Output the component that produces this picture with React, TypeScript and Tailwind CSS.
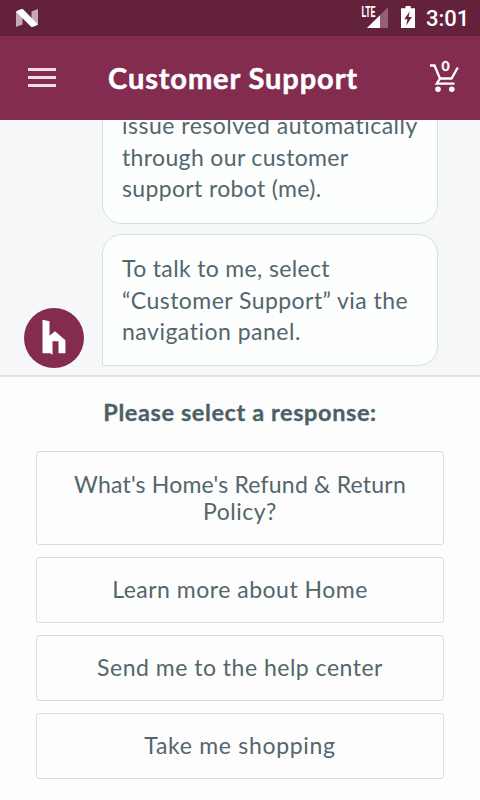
import type { ReactNode } from "react";

function StatusBar() {
  return (
    <div className="flex h-9 shrink-0 items-start justify-between bg-[#64213c]">
      <svg className="h-9 w-12" viewBox="0 0 48 36">
        <path d="M16 11.5 22.5 9V24.5L16 27ZM31.5 11.5 38 9V24.5L31.5 27Z" fill="#c8a9b7" />
        <path d="M16 11.8 Q19 9 22.8 9 L38 24.6 Q35 27 31.3 27Z" fill="#fff" />
      </svg>
      <div className="flex">
        <svg className="h-9 w-[66px]" viewBox="356 0 66 36">
          <text x="361.5" y="17" fontFamily="Roboto, sans-serif" fontWeight="700" fontSize="14" textLength="14" lengthAdjust="spacingAndGlyphs" fill="#fff">LTE</text>
          <path d="M388 7V28H367L378 17V19H376.5Z" fill="#946078" />
          <path d="M367 28 380 15.2V28Z" fill="#fff" />
          <path d="M405.5 6H410.7V8.2H415V28H401V8.2H405.5Z" fill="#fff" />
          <path d="M409.7 11.5 404.3 19.3H407.4L406.3 25.5 411.8 17H408.6Z" fill="#64213c" />
        </svg>
        <span className="mr-3 mt-[5px] w-[46px] whitespace-nowrap pl-1 font-[Roboto,sans-serif] text-[22px] leading-[27px] font-medium text-white">3:01</span>
      </div>
    </div>
  );
}

function AppBar() {
  return (
    <div className="flex h-[84px] shrink-0 items-center bg-[#832c50]">
      <div className="mb-[2px] ml-7 flex w-7 flex-col gap-[5px]">
        <div className="h-[3px] bg-[#eedfe6]" />
        <div className="h-[3px] bg-[#eedfe6]" />
        <div className="h-[3px] bg-[#eedfe6]" />
      </div>
      <h1 className="ml-[52px] flex-1 whitespace-nowrap text-[29px] leading-9 font-bold tracking-[0.9px] text-white [-webkit-text-stroke:0.5px_white]">Customer Support</h1>
      <svg className="mr-[18px] h-10 w-9" viewBox="426 58 36 40">
        <path d="M430 65.5H434.5L440 78.5H451.5L457.8 67.5M440 78.5 436.8 83.6H454.5" fill="none" stroke="#fff" strokeWidth="2.3" />
        <circle cx="438" cy="89.2" r="2.8" fill="#fff" />
        <circle cx="451.8" cy="89.2" r="2.8" fill="#fff" />
        <text x="445.5" y="70.8" textAnchor="middle" fontFamily="Lato, sans-serif" fontWeight="700" fontSize="14" stroke="#fff" strokeWidth="0.3" fill="#fff">0</text>
      </svg>
    </div>
  );
}

function Line({ className, children }: { className: string; children: ReactNode }) {
  return <span className={`block whitespace-nowrap ${className}`}>{children}</span>;
}

function Option({ className, children }: { className: string; children: ReactNode }) {
  return (
    <button className={`flex w-full flex-col items-center justify-center rounded-[3px] border-[1.5px] border-[#d8dfe4] text-center text-[23px] leading-[27px] ${className}`}>
      {children}
    </button>
  );
}

export default function App() {
  return (
    <div className="flex h-[800px] w-[480px] flex-col overflow-hidden bg-[#fdfdfd] font-[Lato,sans-serif] text-[#53666c]">
      <StatusBar />
      <AppBar />
      <div className="flex h-[257px] shrink-0 items-end overflow-hidden border-b-2 border-[#dde2e6] bg-[#f5f7f9] pb-[9px] pl-6">
        <svg className="mb-[-2px] h-[60px] w-[60px] shrink-0" viewBox="24 308 60 60">
          <circle cx="54" cy="338" r="30" fill="#832c50" />
          <path d="M42.5 319.7 49.5 321.2V335.8L55 331.2 65.4 340.3V353.3H58.5V341.3H52.5V355L50.5 353.3H42.5Z" fill="#fff" />
        </svg>
        <div className="ml-[18px] flex w-[336px] flex-col gap-[10px] text-[23px] leading-[31.5px]">
          <div className="rounded-[20px] border-[1.5px] border-[#d8dfe4] bg-[#fdfefe] px-[19px] pt-[18px] pb-[18px]">
            <Line className="tracking-[0.5px]">issue resolved automatically</Line>
            <Line className="tracking-[0.35px]">through our customer</Line>
            <Line className="tracking-[0.35px]">support robot (me).</Line>
          </div>
          <div className="rounded-[20px] rounded-bl-none border-[1.5px] border-[#d8dfe4] bg-[#fdfefe] px-[19px] pt-[18.5px] pb-[17.5px]">
            <Line className="tracking-[0.35px]">To talk to me, select</Line>
            <Line className="tracking-[0.45px]">“Customer Support” via the</Line>
            <Line className="tracking-[0.5px]">navigation panel.</Line>
          </div>
        </div>
      </div>
      <div className="flex flex-col px-9 pt-[19px]">
        <h2 className="whitespace-nowrap text-center text-[23.5px] leading-8 font-bold tracking-[0.6px] text-[#4b6067] [-webkit-text-stroke:0.3px_#4b6067]">Please select a response:</h2>
        <div className="mt-[23px] flex flex-col gap-3">
          <Option className="h-[94px]">
            <Line className="tracking-[0.2px]">What's Home's Refund &amp; Return</Line>
            <Line className="tracking-[0.5px]">Policy?</Line>
          </Option>
          <Option className="h-[66px] pb-[2px]"><Line className="tracking-[0.5px]">Learn more about Home</Line></Option>
          <Option className="h-[66px] pb-[2px]"><Line className="tracking-[0.5px]">Send me to the help center</Line></Option>
          <Option className="h-[66px] pb-[2px]"><Line className="tracking-[0.7px]">Take me shopping</Line></Option>
        </div>
      </div>
    </div>
  );
}
